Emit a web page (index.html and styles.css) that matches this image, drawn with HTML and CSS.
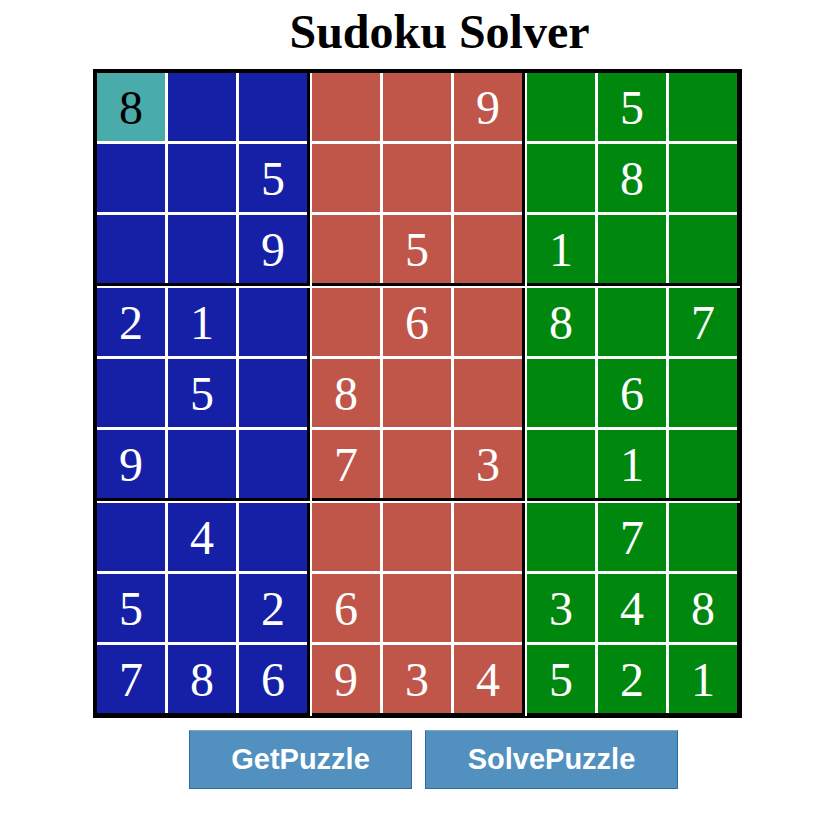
FILE: index.html
```html
<!DOCTYPE html>
<html>
<head>
<meta charset="utf-8">
<title>Sudoku Solver</title>
<link rel="stylesheet" href="styles.css">
</head>
<body>
<h1 class="title">Sudoku Solver</h1>
<div class="board">
  <div class="box blue">
    <div class="cell sel">8</div><div class="cell"></div><div class="cell"></div>
    <div class="cell"></div><div class="cell"></div><div class="cell">5</div>
    <div class="cell"></div><div class="cell"></div><div class="cell">9</div>
  </div>
  <div class="box red">
    <div class="cell"></div><div class="cell"></div><div class="cell">9</div>
    <div class="cell"></div><div class="cell"></div><div class="cell"></div>
    <div class="cell"></div><div class="cell">5</div><div class="cell"></div>
  </div>
  <div class="box green">
    <div class="cell"></div><div class="cell">5</div><div class="cell"></div>
    <div class="cell"></div><div class="cell">8</div><div class="cell"></div>
    <div class="cell">1</div><div class="cell"></div><div class="cell"></div>
  </div>
  <div class="box blue">
    <div class="cell">2</div><div class="cell">1</div><div class="cell"></div>
    <div class="cell"></div><div class="cell">5</div><div class="cell"></div>
    <div class="cell">9</div><div class="cell"></div><div class="cell"></div>
  </div>
  <div class="box red">
    <div class="cell"></div><div class="cell">6</div><div class="cell"></div>
    <div class="cell">8</div><div class="cell"></div><div class="cell"></div>
    <div class="cell">7</div><div class="cell"></div><div class="cell">3</div>
  </div>
  <div class="box green">
    <div class="cell">8</div><div class="cell"></div><div class="cell">7</div>
    <div class="cell"></div><div class="cell">6</div><div class="cell"></div>
    <div class="cell"></div><div class="cell">1</div><div class="cell"></div>
  </div>
  <div class="box blue">
    <div class="cell"></div><div class="cell">4</div><div class="cell"></div>
    <div class="cell">5</div><div class="cell"></div><div class="cell">2</div>
    <div class="cell">7</div><div class="cell">8</div><div class="cell">6</div>
  </div>
  <div class="box red">
    <div class="cell"></div><div class="cell"></div><div class="cell"></div>
    <div class="cell">6</div><div class="cell"></div><div class="cell"></div>
    <div class="cell">9</div><div class="cell">3</div><div class="cell">4</div>
  </div>
  <div class="box green">
    <div class="cell"></div><div class="cell">7</div><div class="cell"></div>
    <div class="cell">3</div><div class="cell">4</div><div class="cell">8</div>
    <div class="cell">5</div><div class="cell">2</div><div class="cell">1</div>
  </div>
</div>
<div class="actions">
  <button class="btn btn-get">GetPuzzle</button>
  <button class="btn btn-solve">SolvePuzzle</button>
</div>
</body>
</html>
```

FILE: styles.css
```css
html, body {
  margin: 0;
  padding: 0;
  background: #ffffff;
}

body {
  font-family: "Liberation Serif", "Times New Roman", serif;
}

.title {
  margin: 4px 0 0 0;
  padding-left: 40px;
  text-align: center;
  font-family: "Liberation Serif", "Times New Roman", serif;
  font-weight: bold;
  font-size: 48px;
  line-height: 55px;
  color: #000000;
}

.board {
  display: grid;
  grid-template-columns: repeat(3, auto);
  gap: 2px;
  width: max-content;
  margin: 10px 0 0 93px;
  background: #ffffff;
  border-style: solid;
  border-color: #000000;
  border-width: 4px 2px 2px 4px;
}

.box {
  display: grid;
  grid-template-columns: repeat(3, 68px);
  grid-auto-rows: 68px;
  gap: 3px;
  background: #ffffff;
  border-right: 3px solid #000000;
  border-bottom: 3px solid #000000;
}

.cell {
  display: flex;
  align-items: center;
  justify-content: center;
  font-family: "Liberation Serif", "Times New Roman", serif;
  font-size: 48px;
  color: #ffffff;
}

.blue .cell { background: #1620a6; }
.red .cell { background: #c0564a; }
.green .cell { background: #00870d; }

.box .cell.sel {
  background: #4aabab;
  color: #000000;
}

.actions {
  display: flex;
  gap: 13px;
  margin-top: 12px;
  padding-left: 189px;
}

.btn {
  height: 59px;
  padding: 0;
  background: #5290c0;
  border: 1px solid #2f6a9c;
  border-top-color: #7ea8cb;
  border-radius: 0;
  color: #ffffff;
  font-family: "Liberation Sans", Arial, sans-serif;
  font-weight: bold;
  font-size: 29px;
}

.btn-get { width: 223px; }
.btn-solve { width: 253px; }
```
